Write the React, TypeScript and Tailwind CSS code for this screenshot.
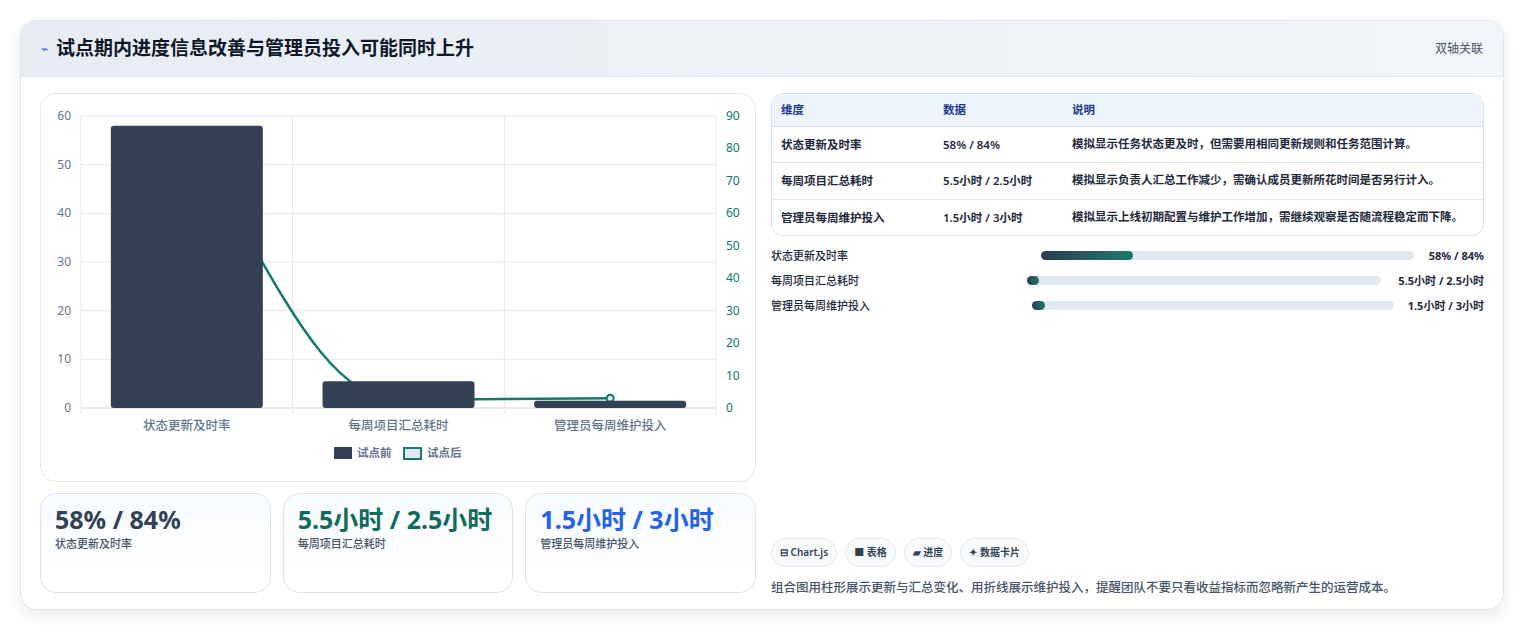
const font = { fontFamily: '"Noto Sans", "Noto Sans CJK SC", sans-serif' };

const rows = [
  ["状态更新及时率", "58% / 84%", "模拟显示任务状态更及时，但需要用相同更新规则和任务范围计算。"],
  ["每周项目汇总耗时", "5.5小时 / 2.5小时", "模拟显示负责人汇总工作减少，需确认成员更新所花时间是否另行计入。"],
  ["管理员每周维护投入", "1.5小时 / 3小时", "模拟显示上线初期配置与维护工作增加，需继续观察是否随流程稳定而下降。"],
];

const progress = [
  { label: "状态更新及时率", value: "58% / 84%", start: 270, end: 1413, fill: 92 },
  { label: "每周项目汇总耗时", value: "5.5小时 / 2.5小时", start: 256, end: 1380, fill: 12 },
  { label: "管理员每周维护投入", value: "1.5小时 / 3小时", start: 261, end: 1393, fill: 13 },
];

function Chart() {
  // plot coords relative to panel (panel origin 40,93)
  const x0 = 40, x1 = 675, y0 = 22, y1 = 314;
  const yL = (v: number) => y1 - (v / 60) * (y1 - y0);
  const yR = (v: number) => y1 - (v / 90) * (y1 - y0);
  const cw = (x1 - x0) / 3;
  const cats = ["状态更新及时率", "每周项目汇总耗时", "管理员每周维护投入"];
  const before = [58, 5.5, 1.5];
  const after = [84, 2.5, 3];
  const cx = (i: number) => x0 + cw * i + cw / 2;
  const p = after.map((v, i) => [cx(i), yR(v)]);
  const d = `M${p[0][0]},${p[0][1]} C${p[0][0] + 80},${p[0][1] + 120} ${p[1][0] - 80},${p[1][1]} ${p[1][0]},${p[1][1]} C${p[1][0] + 70},${p[1][1] - 1} ${p[2][0] - 70},${p[2][1] + 1} ${p[2][0]},${p[2][1]}`;
  return (
    <svg width="715" height="388" className="block" style={font}>
      {[0, 10, 20, 30, 40, 50, 60].map((v) => (
        <g key={v}>
          <line x1={x0} x2={x1} y1={yL(v)} y2={yL(v)} stroke={v === 0 ? "#cbd5e1" : "#e5e7eb"} />
          <text x={x0 - 10} y={yL(v) + 4} textAnchor="end" fontSize="12" fill="#64748b">{v}</text>
        </g>
      ))}
      {[0, 10, 20, 30, 40, 50, 60, 70, 80, 90].map((v) => (
        <text key={v} x={x1 + 10} y={yR(v) + 4} fontSize="12" fill="#0f766e">{v}</text>
      ))}
      {[0, 1, 2, 3].map((i) => (
        <line key={i} x1={x0 + cw * i} x2={x0 + cw * i} y1={y0} y2={y1 + 6} stroke="#e5e7eb" />
      ))}
      <path d={d} fill="none" stroke="#157a6e" strokeWidth="2.5" />
      <circle cx={p[2][0]} cy={p[2][1]} r="3.5" fill="#e2e8f0" stroke="#157a6e" strokeWidth="2" />
      {before.map((v, i) => (
        <rect key={i} x={cx(i) - 76} y={yL(v)} width="152" height={y1 - yL(v)} rx="3" fill="#334155" />
      ))}
      {cats.map((c, i) => (
        <text key={c} x={cx(i)} y={336} textAnchor="middle" fontSize="12.5" fontWeight="500" fill="#64748b">{c}</text>
      ))}
      <rect x="293" y="353" width="18" height="12" fill="#334155" />
      <text x="316" y="363" fontSize="11.5" fill="#64748b" fontWeight="600">试点前</text>
      <rect x="363" y="354" width="17" height="11" fill="#e2e8f0" stroke="#157a6e" strokeWidth="2" />
      <text x="386" y="363" fontSize="11.5" fill="#64748b" fontWeight="600">试点后</text>
    </svg>
  );
}

export default function App() {
  return (
    <div className="h-[632px] w-[1525px] bg-white" style={font}>
      <div className="pt-5 pl-5">
        <div className="w-[1484px] h-[590px] rounded-2xl border border-[#dfe4ec] bg-white shadow-[0_6px_16px_rgba(15,23,42,0.08)] overflow-hidden">
          <div className="h-[56px] flex items-center justify-between px-5 bg-gradient-to-r from-[#e8edf4] to-[#f2f5f9] border-b border-[#e2e8f0]">
            <div className="flex items-center gap-2">
              <span className="text-[#3b5bdb] text-xs">⌁</span>
              <span className="text-[19px] font-bold text-[#0f172a]">试点期内进度信息改善与管理员投入可能同时上升</span>
            </div>
            <span className="text-xs text-[#475569]">双轴关联</span>
          </div>
          <div className="flex gap-[15px] px-[19px] pt-[16px] h-[533px]">
            <div className="w-[716px] flex flex-col gap-[11px]">
              <div className="h-[389px] rounded-2xl border border-[#e2e8f0] bg-white">
                <Chart />
              </div>
              <div className="grid grid-cols-3 gap-3">
                {[
                  ["58% / 84%", "状态更新及时率", "text-[#334155]"],
                  ["5.5小时 / 2.5小时", "每周项目汇总耗时", "text-[#0f6b5e]"],
                  ["1.5小时 / 3小时", "管理员每周维护投入", "text-[#2563eb]"],
                ].map(([v, l, c]) => (
                  <div key={l} className="h-[100px] rounded-2xl border border-[#dbe5f1] bg-gradient-to-b from-[#f8fbff] to-white px-[14px] pt-[12px]">
                    <div className={`text-[25px] leading-[26px] font-bold ${c}`}>{v}</div>
                    <div className="mt-[4px] text-[11px] font-medium text-[#475569]">{l}</div>
                  </div>
                ))}
              </div>
            </div>
            <div className="w-[716px] flex flex-col">
              <div className="rounded-xl border border-[#d9e2ec] overflow-hidden text-[11.5px] font-semibold">
                <div className="flex h-[33px] items-center bg-[#eef5fe] border-b border-[#d9e2ec] text-[#1e3a8a]">
                  <div className="w-[171px] pl-[9px]">维度</div>
                  <div className="w-[129px]">数据</div>
                  <div className="flex-1">说明</div>
                </div>
                {rows.map(([a, b, c], i) => (
                  <div key={a} className={`flex py-[9px] text-[#1e293b] ${i < 2 ? "border-b border-[#e2e8f0]" : ""}`}>
                    <div className="w-[171px] pl-[9px]">{a}</div>
                    <div className="w-[129px]">{b}</div>
                    <div className="flex-1 pr-5 leading-[16px]">{c}</div>
                  </div>
                ))}
              </div>
              <div className="mt-[13px] flex flex-col gap-[11px] text-[11px] font-semibold text-[#1e293b]">
                {progress.map((r) => (
                  <div key={r.label} className="flex items-center h-[14px]">
                    <div style={{ width: r.start }} className="shrink-0 font-medium">{r.label}</div>
                    <div style={{ width: r.end - 770 - r.start }} className="h-[9px] rounded-full bg-[#e2e8f0] shrink-0">
                      <div style={{ width: r.fill }} className="h-full rounded-full bg-gradient-to-r from-[#2b3b50] to-[#157a6e]" />
                    </div>
                    <div className="flex-1 text-right font-bold">{r.value}</div>
                  </div>
                ))}
              </div>
              <div className="mt-auto pb-[12px]">
                <div className="flex gap-2 text-[10px] font-semibold text-[#334155]">
                  {["⊟ Chart.js", "■ 表格", "▰ 进度", "✦ 数据卡片"].map((t) => (
                    <span key={t} className="rounded-full border border-[#e2e8f0] bg-[#f8fafc] px-[8px] py-[6px]">{t}</span>
                  ))}
                </div>
                <p className="mt-[12px] text-[12.5px] font-medium text-[#475569]">组合图用柱形展示更新与汇总变化、用折线展示维护投入，提醒团队不要只看收益指标而忽略新产生的运营成本。</p>
              </div>
            </div>
          </div>
        </div>
      </div>
    </div>
  );
}
